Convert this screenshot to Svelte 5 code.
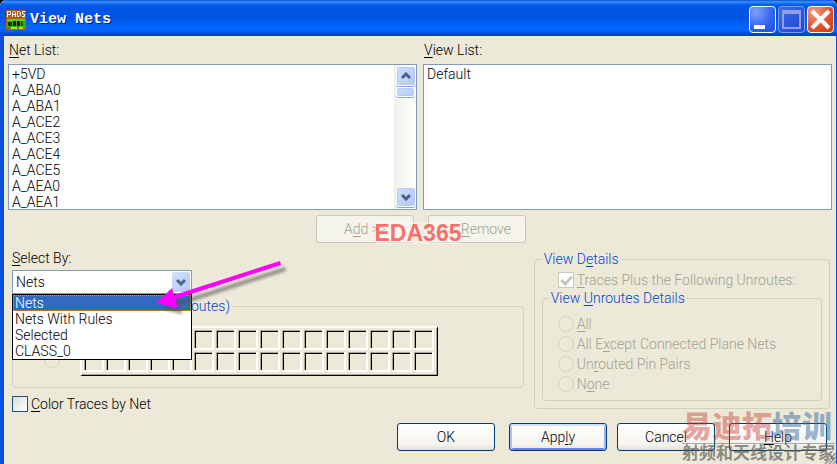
<script lang="ts">
  const nets = ["+5VD", "A_ABA0", "A_ABA1", "A_ACE2", "A_ACE3", "A_ACE4", "A_ACE5", "A_AEA0", "A_AEA1"];
  const views = ["Default"];
  const filters = ["Nets", "Nets With Rules", "Selected", "CLASS_0"];
  const swatches = Array.from({ length: 32 }, (_, i) => i);

  // label split around its access key
  const unroutes = [
    ["", "A", "ll"],
    ["All E", "x", "cept Connected Plane Nets"],
    ["Un", "r", "outed Pin Pairs"],
    ["N", "o", "ne"],
  ];

  let filter = $state("Nets");
  let open = $state(true);

  function pick(name: string) {
    filter = name;
    open = false;
  }
</script>

<main class="window">
  <header class="titlebar">
    <svg class="app-icon" viewBox="0 0 20 20" aria-hidden="true">
      <rect width="20" height="20" fill="#b85a10" />
      <g fill="none" stroke="#fff" stroke-width="1">
        <path d="M1.5 7V1.5H4.5V4.5H1.5" />
        <path d="M6.5 7V2.5L7.5 1.5H8.5L9.5 2.5V7M6.5 4.5H9.5" />
        <path d="M11.5 1.5V6.5H13L14.5 5V3L13 1.5Z" />
        <path d="M19 1.5H16.5V3.5L18.5 4.5V6.5H16" />
      </g>
      <rect x="1" y="9" width="18" height="8" fill="#2fb40e" />
      <rect x="1" y="9" width="18" height="2" fill="#58d020" />
      <rect x="2" y="12" width="4" height="4" fill="#22331a" />
      <rect x="7" y="11" width="7" height="5" fill="#1c2618" />
      <rect x="10" y="11" width="1" height="5" fill="#70806a" />
      <rect x="15" y="11" width="2" height="5" fill="#1d5a10" />
      <path d="M5 17h6v2H5zM13 17h4v2h-4z" fill="#ffc81c" />
    </svg>
    <h1>View Nets</h1>
    <div class="controls">
      <button class="control" aria-label="Minimize">
        <svg viewBox="0 0 27 27"><rect x="5" y="19" width="11" height="4" fill="#fff" /></svg>
      </button>
      <button class="control off" aria-label="Maximize" disabled>
        <svg viewBox="0 0 27 27">
          <path d="M5 5h17v17H5z" fill="none" stroke="#8f9fee" stroke-width="2" />
          <path d="M4 6h19" stroke="#8f9fee" stroke-width="4" />
        </svg>
      </button>
      <button class="control close" aria-label="Close">
        <svg viewBox="0 0 27 27"><path d="M5 5L22 22M22 5L5 22" stroke="#fff" stroke-width="4" /></svg>
      </button>
    </div>
  </header>

  <div class="content">
    <div class="lists">
      <div class="list">
        <label for="net-list"><u>N</u>et List:</label>
        <div class="box">
          <select id="net-list" size="9" multiple>
            {#each nets as net}
              <option>{net}</option>
            {/each}
          </select>
          <div class="scrollbar">
            <button class="arrow" aria-label="Scroll up">
              <svg viewBox="0 0 10 8"><path d="M1 6L5 2L9 6" /></svg>
            </button>
            <div class="thumb"></div>
            <button class="arrow last" aria-label="Scroll down">
              <svg viewBox="0 0 10 8"><path d="M1 2L5 6L9 2" /></svg>
            </button>
          </div>
        </div>
      </div>
      <div class="list">
        <label for="view-list"><u>V</u>iew List:</label>
        <div class="box">
          <select id="view-list" size="9" multiple>
            {#each views as view}
              <option>{view}</option>
            {/each}
          </select>
        </div>
      </div>
    </div>

    <div class="transfer">
      <button class="btn" disabled>A<u>d</u>d &gt;&gt;</button>
      <button class="btn" disabled>&lt;&lt; <u>R</u>emove</button>
      <span class="stamp">EDA365</span>
    </div>

    <div class="options">
      <div class="left">
        <label for="filter"><u>S</u>elect By:</label>
        <div class="combo">
          <select id="filter" bind:value={filter}>
            {#each filters as name}
              <option>{name}</option>
            {/each}
          </select>
          <span class="drop"><svg viewBox="0 0 10 8"><path d="M1 2L5 6L9 2" /></svg></span>
          {#if open}
            <ul class="menu">
              {#each filters as name}
                <li><button class:current={name === filter} onclick={() => pick(name)}>{name}</button></li>
              {/each}
            </ul>
          {/if}
          <svg class="pointer" viewBox="0 0 140 60" aria-hidden="true">
            <defs>
              <filter id="soft" x="-10%" y="-20%" width="120%" height="150%">
                <feGaussianBlur stdDeviation="1.5" />
              </filter>
              <path id="pointer-shape" d="M4 41L20 26L22 33L128 -1L129 3L24 37L25 46Z" />
            </defs>
            <use href="#pointer-shape" x="5" y="6" fill="#555" opacity="0.6" filter="url(#soft)" />
            <use href="#pointer-shape" fill="#f0f" />
          </svg>
        </div>

        <fieldset class="colors" disabled>
          <legend>Color by Net (Pins, Vias, Unroutes)</legend>
          <div class="picker">
            <div class="modes">
              <input type="radio" name="mode" aria-label="Color" />
              <input type="radio" name="mode" aria-label="None" />
            </div>
            <div class="palette">
              {#each swatches as n}
                <button class="swatch" aria-label={`Color ${n + 1}`}></button>
              {/each}
            </div>
          </div>
        </fieldset>

        <label class="check"><input type="checkbox" /><span><u>C</u>olor Traces by Net</span></label>
      </div>

      <fieldset class="details">
        <legend>View D<u>e</u>tails</legend>
        <label class="check off">
          <input type="checkbox" checked disabled />
          <span><u>T</u>races Plus the Following Unroutes:</span>
        </label>
        <fieldset class="unroutes" disabled>
          <legend>View <u>U</u>nroutes Details</legend>
          {#each unroutes as [before, key, after]}
            <label class="check off">
              <input type="radio" name="unroutes" />
              <span>{before}<u>{key}</u>{after}</span>
            </label>
          {/each}
        </fieldset>
      </fieldset>
    </div>

    <footer>
      <button class="btn">OK</button>
      <button class="btn default">App<u>l</u>y</button>
      <div class="pair">
        <button class="btn">Cancel</button>
        <button class="btn"><u>H</u>elp</button>
      </div>
    </footer>
  </div>

  <svg class="grip" viewBox="0 0 12 12" aria-hidden="true">
    <path d="M1 12L12 1M5 12L12 5M9 12L12 9" stroke="#aca899" stroke-width="2" />
  </svg>
  <div class="brand">
    <p class="name"><span>易迪拓</span>培训</p>
    <p class="slogan">射频和天线设计专家</p>
  </div>
</main>

<style>
  :global(body) {
    margin: 0;
    background: #ece9d8;
  }

  .window {
    position: relative;
    box-sizing: border-box;
    min-height: 100vh;
    overflow: hidden;
    background: #ece9d8;
    color: #000;
    font: 300 14px/16px Roboto, "Liberation Sans", Arial, sans-serif;
  }

  .window::before {
    content: "";
    position: absolute;
    inset: 30px 0 0;
    border-left: 4px solid #0a4fe0;
    border-right: 1px solid #0a4fe0;
    pointer-events: none;
  }

  button,
  select,
  input,
  option {
    margin: 0;
    font: inherit;
    color: inherit;
  }

  u {
    text-underline-offset: 2px;
  }

  .titlebar {
    position: relative;
    display: flex;
    align-items: center;
    gap: 4px;
    box-sizing: border-box;
    height: 36px;
    padding: 3px 3px 0 6px;
    border-radius: 6px 6px 0 0;
    background: linear-gradient(#0a50d8 0, #3a94ff 2px, #0a62f0 4px, #0054e3 8px, #0055e5 18px, #0066ff 27px, #0062fa 31px, #0047cf 34px, #003dc8 36px);
    box-shadow: 0 -6px 0 6px #000;
    clip-path: inset(0);
  }

  .app-icon {
    width: 20px;
    height: 20px;
  }

  h1 {
    flex: 1;
    margin: 0;
    color: #fff;
    font: bold 15px/20px "Liberation Mono", "Courier New", monospace;
    text-shadow: 1px 1px #0a1883;
  }

  .controls {
    display: flex;
    gap: 2px;
  }

  .control {
    width: 27px;
    height: 27px;
    padding: 0;
    border: 1px solid #fff;
    border-radius: 4px;
    background: radial-gradient(circle at 25% 20%, #7da0fb, #2f62ee 60%, #1c4fdc);
  }

  .control svg {
    display: block;
    width: 27px;
    height: 27px;
    margin: -1px;
  }

  .control.off {
    border-color: #7b9bf0;
    background: linear-gradient(135deg, #3f6bea, #1c48d4);
  }

  .control.close {
    background: radial-gradient(circle at 25% 20%, #f09a80, #e1502a 60%, #cc3a10);
  }

  .content {
    padding: 6px 5px 13px 8px;
  }

  .lists {
    display: flex;
    gap: 6px;
  }

  .list {
    flex: 1;
    min-width: 0;
  }

  .list label {
    display: block;
    margin: 0 1px 6px;
  }

  .box {
    display: flex;
    box-sizing: border-box;
    height: 146px;
    border: 1px solid #7f9db9;
    background: #fff;
  }

  .box select {
    flex: 1;
    min-width: 0;
    padding: 1px 0 0;
    border: 0;
    outline: 0;
    background: #fff;
    overflow: hidden;
    scrollbar-width: none;
  }

  .box option {
    height: 16px;
    min-height: 16px;
    padding: 0 3px;
    line-height: 16px;
  }

  .scrollbar {
    display: flex;
    flex-direction: column;
    width: 22px;
    padding: 1px 1px 2px;
    box-sizing: border-box;
    border-left: 1px solid #eeede5;
    background: linear-gradient(90deg, #f3f1ec, #fefefb);
  }

  .arrow,
  .thumb {
    box-sizing: border-box;
    padding: 0;
    border: 1px solid #fff;
    border-radius: 3px;
    background: linear-gradient(135deg, #cfddfd, #b0c9f8);
    box-shadow: inset 0 0 0 1px #b4c8f6, 0 1px #86a5e6;
  }

  .arrow {
    width: 20px;
    height: 20px;
  }

  .arrow svg,
  .drop svg {
    display: block;
    width: 10px;
    height: 8px;
    margin: auto;
    fill: none;
    stroke: #4d6185;
    stroke-width: 3;
  }

  .thumb {
    height: 10px;
    margin-top: 1px;
  }

  .last {
    margin-top: auto;
  }

  .transfer {
    position: relative;
    display: flex;
    justify-content: center;
    gap: 14px;
    margin: 5px 0 6px;
    padding-left: 2px;
  }

  .stamp {
    position: absolute;
    top: 7px;
    left: 50%;
    transform: translateX(-50%);
    margin-left: -2px;
    background: rgba(255, 255, 255, 0.35);
    color: rgba(255, 50, 45, 0.7);
    font: bold 23px/22px "Liberation Sans", Arial, sans-serif;
  }

  .btn {
    box-sizing: border-box;
    width: 98px;
    height: 28px;
    padding: 0;
    border: 1px solid #003c74;
    border-radius: 3px;
    background: linear-gradient(#fff, #f4f3ee 80%, #e2dfd4);
  }

  .btn:disabled {
    border-color: #c9c7ba;
    background: #f5f4ea;
    color: #a1a192;
  }

  .default {
    box-shadow: inset 0 2px #cee0fc, inset 2px 0 #a6c1f5, inset -2px 0 #98b5ee, inset 0 -2px #6982ee;
  }

  .options {
    display: grid;
    grid-template-columns: minmax(0, 19fr) minmax(0, 11fr);
    align-items: start;
    gap: 10px;
    padding: 0 2px 0 4px;
  }

  .left {
    padding-top: 1px;
  }

  .left > label {
    display: block;
  }

  .combo {
    position: relative;
    z-index: 1;
    width: 180px;
    margin: 4px 0;
  }

  .combo select {
    display: block;
    box-sizing: border-box;
    width: 100%;
    height: 24px;
    padding: 0 22px 0 3px;
    border: 1px solid #7f9db9;
    border-radius: 0;
    outline: 0;
    background: #fff;
    appearance: none;
  }

  .drop {
    position: absolute;
    top: 2px;
    right: 2px;
    display: flex;
    width: 18px;
    height: 20px;
    border-radius: 2px;
    background: linear-gradient(135deg, #d3e0fe, #b0c7f7);
    pointer-events: none;
  }

  .menu {
    position: absolute;
    top: 24px;
    left: 0;
    right: 0;
    margin: 0;
    padding: 0;
    border: 1px solid #000;
    background: #fff;
    list-style: none;
  }

  .menu button {
    display: block;
    width: 100%;
    height: 16px;
    padding: 0 2px;
    border: 0;
    background: none;
    text-align: left;
    line-height: 16px;
  }

  .menu .current {
    outline: 1px dotted #ce953a;
    outline-offset: -1px;
    background: #316ac5;
    color: #fff;
  }

  .pointer {
    position: absolute;
    top: -8px;
    left: 140px;
    width: 140px;
    height: 60px;
    overflow: visible;
    pointer-events: none;
  }

  fieldset {
    min-width: 0;
    margin: 0;
    box-sizing: border-box;
    border: 1px solid #d0d0bf;
    border-radius: 4px;
  }

  legend {
    padding: 0 2px;
    color: #0046d5;
    white-space: nowrap;
  }

  .colors {
    height: 90px;
    padding: 12px 6px 0;
  }

  .picker {
    display: flex;
    gap: 20px;
    padding-left: 25px;
  }

  .modes {
    display: flex;
    flex-direction: column;
    gap: 6px;
    padding-top: 4px;
  }

  .palette {
    display: grid;
    grid-template-columns: repeat(16, 20px);
    gap: 2px;
    padding: 2px 3px 3px 2px;
    border: solid;
    border-width: 2px 1px 1px 2px;
    border-color: #fff #000 #000 #fff;
    box-shadow: inset -1px -1px #aca899;
  }

  .swatch {
    box-sizing: border-box;
    width: 20px;
    height: 20px;
    padding: 0;
    border: solid #fff;
    border-width: 0 2px 2px 0;
    background: #ece9d8;
    box-shadow: inset 1px 1px #aca899, inset 2px 2px #000;
  }

  .check {
    display: flex;
    align-items: center;
    gap: 3px;
    height: 16px;
    white-space: nowrap;
  }

  .left > .check {
    display: flex;
    margin-top: 8px;
  }

  .check.off {
    color: #a1a192;
  }

  input {
    flex: none;
    box-sizing: border-box;
    width: 16px;
    height: 16px;
    border: 1px solid #1c5180;
    background: linear-gradient(135deg, #dcdcd7, #fff);
    appearance: none;
  }

  input:disabled {
    border-color: #cac8bb;
    background: #fff;
  }

  .details input[type="checkbox"] {
    position: relative;
  }

  .details input:checked::before {
    content: "";
    position: absolute;
    top: 1px;
    left: 4px;
    width: 4px;
    height: 8px;
    border: solid #cac8bb;
    border-width: 0 3px 3px 0;
    transform: rotate(42deg);
  }

  input[type="radio"] {
    border-radius: 50%;
    border-color: #d3d1c2;
    background: #ece9d8;
  }

  .details {
    margin-top: 2px;
    padding: 5px 7px 7px;
  }

  .details > .check {
    padding-left: 16px;
  }

  .unroutes {
    margin-top: 2px;
    padding: 10px 6px 8px;
  }

  .unroutes .check {
    padding-left: 9px;
  }

  .unroutes .check + .check {
    margin-top: 4px;
  }

  footer {
    display: flex;
    justify-content: flex-end;
    gap: 14px;
    margin-top: 11px;
    padding-right: 5px;
  }

  .pair {
    display: flex;
    gap: 14px;
    margin-left: -4px;
  }

  .grip {
    position: absolute;
    right: 1px;
    bottom: 0;
    width: 12px;
    height: 12px;
  }

  .brand {
    position: absolute;
    right: 2px;
    bottom: 0;
    font-family: "Liberation Sans", "Noto Sans CJK SC", sans-serif;
    white-space: nowrap;
    pointer-events: none;
  }

  .brand p {
    margin: 0;
  }

  .name {
    border-bottom: 1px solid rgba(120, 120, 115, 0.6);
    color: rgba(60, 110, 165, 0.5);
    font-size: 30px;
    font-weight: 900;
    line-height: 32px;
  }

  .name span {
    color: rgba(200, 60, 60, 0.45);
  }

  .slogan {
    color: rgba(95, 95, 90, 0.7);
    font-size: 17px;
    font-weight: bold;
    line-height: 20px;
  }
</style>
